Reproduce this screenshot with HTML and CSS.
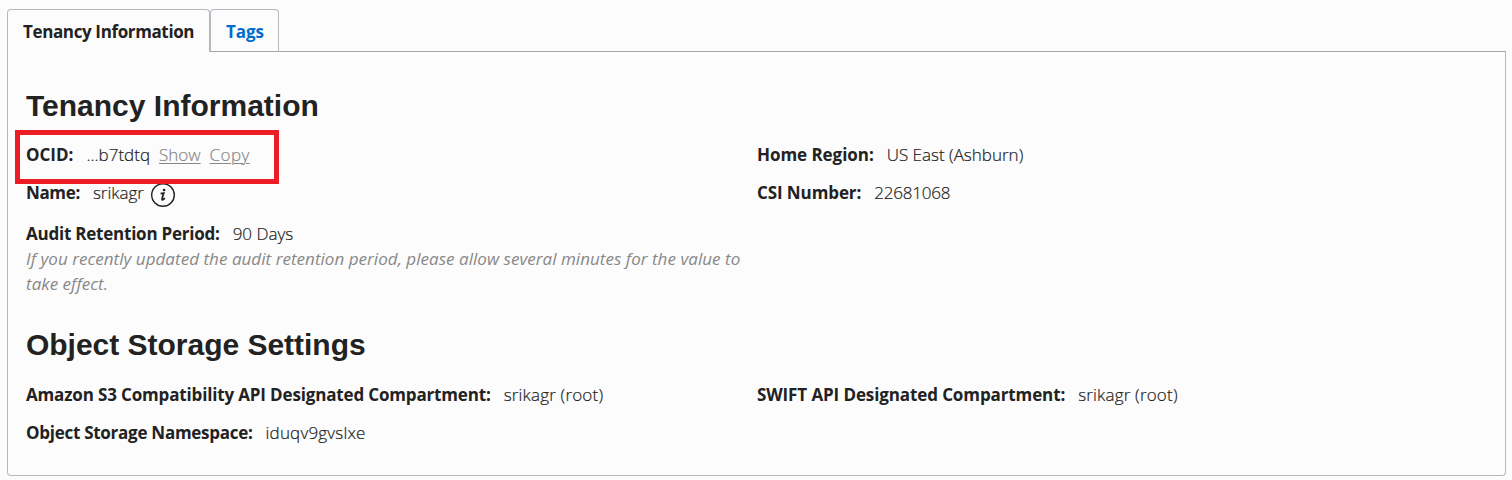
FILE: index.html
```html
<!DOCTYPE html>
<html lang="en">
<head>
<meta charset="utf-8">
<title>Tenancy Information</title>
<link rel="stylesheet" href="styles.css">
</head>
<body>
<main class="page">
  <nav class="tabs">
    <a class="tab active">Tenancy Information</a>
    <a class="tab tags">Tags</a>
    <div class="tab-line"></div>
  </nav>
  <section class="panel">
    <h2 class="title">Tenancy Information</h2>
    <div class="grid">
      <div class="column">
        <div class="row ocid"><b>OCID:</b><span>...b7tdtq</span><a class="link">Show</a><a class="link copy">Copy</a><div class="highlight"></div></div>
        <div class="row name"><b>Name:</b><span>srikagr</span>
          <svg class="info" viewBox="0 0 24 24"><circle cx="12" cy="12" r="11.3"/><circle class="dot" cx="13.1" cy="7" r="1.35"/><path class="stem" d="M9.6 10.7 12.7 10.1 11.1 15.6C10.7 17.4 12 17.2 13.9 15.2"/></svg>
        </div>
        <div class="row audit"><b>Audit Retention Period:</b><span>90 Days</span></div>
        <p class="note">If you recently updated the audit retention period, please allow several minutes for the value to<br>take effect.</p>
      </div>
      <div class="column">
        <div class="row region"><b>Home Region:</b><span>US East (Ashburn)</span></div>
        <div class="row csi"><b>CSI Number:</b><span>22681068</span></div>
      </div>
    </div>
    <h2 class="title storage-title">Object Storage Settings</h2>
    <div class="grid storage">
      <div class="column">
        <div class="row amazon"><b>Amazon S3 Compatibility API Designated Compartment:</b><span>srikagr (root)</span></div>
        <div class="row namespace"><b>Object Storage Namespace:</b><span>iduqv9gvslxe</span></div>
      </div>
      <div class="column">
        <div class="row swift"><b>SWIFT API Designated Compartment:</b><span>srikagr (root)</span></div>
      </div>
    </div>
  </section>
</main>
</body>
</html>
```
FILE: styles.css
```css
* { box-sizing: border-box; }
body { margin: 0; background: #fcfcfc; color: #222; font: 300 17px/25px "Open Sans", "Noto Sans", sans-serif; }
.page { padding: 9px 6px 4px 7px; height: 480px; display: flex; flex-direction: column; }
.tabs { display: flex; height: 43px; }
.tab { border: 1px solid #b4b8c0; border-radius: 4px 4px 0 0; padding: 9px 15px; font-weight: 700; white-space: nowrap; }
.tab.active { width: 203px; border-bottom: 0; letter-spacing: -0.37px; }
.tab.tags { width: 69px; color: #006dcc; border-bottom-color: #a5a7ab; letter-spacing: -0.1px; }
.tab-line { flex: 1; border-bottom: 1px solid #a5a7ab; }
.panel { flex: 1; border: 1px solid #b4b8c0; border-top: 0; border-radius: 0 0 4px 4px; padding: 36px 18px 0; }
.title { margin: 0 0 18px; font: 700 30px/36px "Liberation Sans", Arial, sans-serif; }
.storage-title { margin: 31px 0 19px; letter-spacing: -0.02px; }
.grid { display: grid; grid-template-columns: 731px 1fr; }
.row { height: 38px; display: flex; gap: 13px; white-space: nowrap; }
.row span { -webkit-text-stroke: 0.2px #222; }
b { font-weight: 700; }

.ocid { position: relative; }
.highlight { position: absolute; left: -11px; top: -12px; width: 264px; height: 54px; border: 5px solid #ed1c24; z-index: 1; }
.link { color: #888; text-decoration: underline; text-decoration-thickness: 1px; text-underline-offset: 2px; margin-left: -4px; -webkit-text-stroke: 0.2px #888; }
.copy { letter-spacing: 0.4px; }
.name { height: 41px; }
.name b { letter-spacing: -0.36px; }
.info { width: 24px; height: 24px; margin: 2.5px 0 0 -5.5px; fill: none; stroke: #222; stroke-width: 1.4; }
.dot { fill: #222; stroke: none; }
.stem { stroke-width: 1.8; }
.audit { height: 25px; }
.audit b { letter-spacing: -0.23px; }
.note { margin: 0; font-style: italic; font-weight: 400; color: #888; white-space: nowrap; letter-spacing: 0.037px; }
.region b { letter-spacing: -0.05px; }
.csi b { letter-spacing: -0.1px; }
.csi span { letter-spacing: -0.2px; }

.storage span { letter-spacing: 0.18px; }
.amazon b { letter-spacing: -0.157px; }
.namespace b { letter-spacing: -0.27px; }
.swift b { letter-spacing: -0.106px; }
```
